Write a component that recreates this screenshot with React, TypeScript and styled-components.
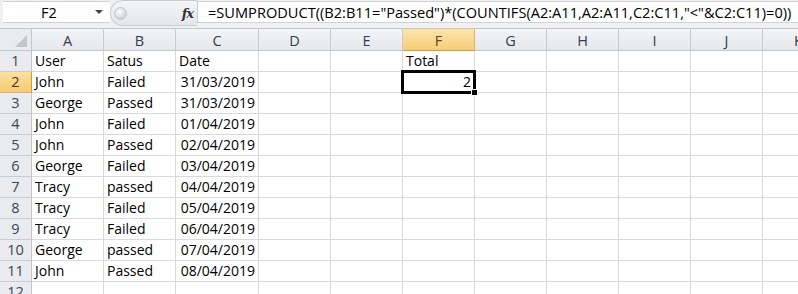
import styled, {createGlobalStyle} from "styled-components";

const GlobalStyle = createGlobalStyle`
  html, body {
    margin: 0;
    padding: 0;
    background: #fff;
    overflow: hidden;
  }
  * {
    box-sizing: border-box;
  }
`

const COLS = [
  {key: "A", width: 72},
  {key: "B", width: 72},
  {key: "C", width: 83},
  {key: "D", width: 72},
  {key: "E", width: 72},
  {key: "F", width: 72},
  {key: "G", width: 72},
  {key: "H", width: 72},
  {key: "I", width: 72},
  {key: "J", width: 72},
  {key: "K", width: 72},
]

const ACTIVE_COL = "F"
const ACTIVE_ROW = 2

const gridTemplate = `32px ${COLS.map(c => c.width + "px").join(" ")}`

const Sheet = styled.div`
  width: 798px;
  height: 294px;
  overflow: hidden;
  font-family: "Open Sans", "Liberation Sans", sans-serif;
  font-size: 14px;
  color: #000;
`

const FormulaBar = styled.div`
  display: flex;
  align-items: center;
  height: 29px;
  padding-left: 3px;
  background: #eef0f3;
  border-bottom: 1px solid #c3c7cd;
`

const NameBox = styled.div`
  position: relative;
  width: 107px;
  height: 22px;
  margin-top: -4px;
  background: #fff;
  border-top: 1px solid #cfd3d8;
  border-bottom: 1px solid #cfd3d8;
  display: flex;
  align-items: center;
  padding-left: 38px;
  font-size: 14.5px;
`

const DropArrow = styled.span`
  position: absolute;
  right: 7px;
  top: 8px;
  width: 0;
  height: 0;
  border-left: 4px solid transparent;
  border-right: 4px solid transparent;
  border-top: 4px solid #444;
`

const Splitter = styled.div`
  display: flex;
  align-items: center;
  justify-content: space-between;
  width: 87px;
  height: 26px;
  margin-top: -2px;
  padding: 0 4px 0 3px;
  background: linear-gradient(#f4f5f7, #e4e6ea);
  border: 1px solid #c8ccd2;
  border-right: none;
  border-radius: 13px 0 0 13px;
`

const Knob = styled.span`
  width: 13px;
  height: 13px;
  border-radius: 50%;
  background: radial-gradient(circle at 40% 35%, #ffffff 0%, #e0e2e5 45%, #b9bcc1 100%);
  border: 1px solid #c4c7cc;
`

const FxLabel = styled.span`
  font-family: "DejaVu Serif", "Liberation Serif", serif;
  font-style: italic;
  font-weight: bold;
  font-size: 13px;
  color: #333;
  margin-top: 1px;
  letter-spacing: -1px;
`

const FormulaInput = styled.div`
  flex: 1;
  height: 22px;
  margin-top: -4px;
  background: #fff;
  border-top: 1px solid #cfd3d8;
  border-bottom: 1px solid #cfd3d8;
  border-left: 1px solid #c8ccd2;
  padding-left: 10px;
  display: flex;
  align-items: center;
  font-size: 14.6px;
  white-space: nowrap;
  overflow: hidden;
`

const Row = styled.div<{$h: number}>`
  display: grid;
  grid-template-columns: ${gridTemplate};
  height: ${p => p.$h}px;
`

const Corner = styled.div`
  position: relative;
  background: #e9ebee;
  border-right: 1px solid #c3c7cd;
  border-bottom: 1px solid #c3c7cd;
  &::after {
    content: "";
    position: absolute;
    right: 4px;
    bottom: 3px;
    width: 0;
    height: 0;
    border-left: 12px solid transparent;
    border-bottom: 12px solid #c3c7cd;
  }
`

const ColHeader = styled.div<{$active?: boolean}>`
  display: flex;
  align-items: center;
  justify-content: center;
  padding-top: 1px;
  background: ${p => p.$active
    ? "linear-gradient(#fbe4ac, #f6ce7b)"
    : "linear-gradient(#f3f4f6, #e5e7eb)"};
  border-right: 1px solid ${p => p.$active ? "#e2b45a" : "#c8ccd2"};
  border-bottom: 1px solid ${p => p.$active ? "#e39a1c" : "#c3c7cd"};
  color: ${p => p.$active ? "#5b4420" : "#2f3d51"};
  font-size: 14.5px;
`

const RowHeader = styled.div<{$active?: boolean}>`
  display: flex;
  align-items: flex-end;
  justify-content: center;
  padding-bottom: 1px;
  line-height: 18px;
  background: ${p => p.$active ? "linear-gradient(#fbe1a3, #f5ca72)" : "#e9ebee"};
  border-right: 1px solid ${p => p.$active ? "#e39a1c" : "#c3c7cd"};
  border-bottom: 1px solid ${p => p.$active ? "#e2b45a" : "#c8ccd2"};
  color: ${p => p.$active ? "#4a3a1d" : "#3c4658"};
  font-size: 14.5px;
`

const Cell = styled.div<{$align?: string; $selected?: boolean}>`
  position: relative;
  z-index: ${p => p.$selected ? 2 : "auto"};
  display: flex;
  align-items: flex-end;
  justify-content: ${p => p.$align === "right" ? "flex-end" : "flex-start"};
  padding: 0 3px 1px 3px;
  line-height: 18px;
  border-right: 1px solid #dadada;
  border-bottom: 1px solid #dadada;
  white-space: nowrap;
`

const Selection = styled.div`
  position: absolute;
  left: -2px;
  top: -2px;
  right: -2px;
  bottom: -2px;
  border: 3px solid #000;
  pointer-events: none;
`

const FillHandle = styled.span`
  position: absolute;
  right: -5px;
  bottom: -5px;
  width: 7px;
  height: 7px;
  background: #000;
  border: 1px solid #fff;
`

type CellData = {text: string; align?: "left" | "right"}

const data: Record<number, Record<string, CellData>> = {
  1: {A: {text: "User"}, B: {text: "Satus"}, C: {text: "Date"}, F: {text: "Total"}},
  2: {A: {text: "John"}, B: {text: "Failed"}, C: {text: "31/03/2019", align: "right"}, F: {text: "2", align: "right"}},
  3: {A: {text: "George"}, B: {text: "Passed"}, C: {text: "31/03/2019", align: "right"}},
  4: {A: {text: "John"}, B: {text: "Failed"}, C: {text: "01/04/2019", align: "right"}},
  5: {A: {text: "John"}, B: {text: "Passed"}, C: {text: "02/04/2019", align: "right"}},
  6: {A: {text: "George"}, B: {text: "Failed"}, C: {text: "03/04/2019", align: "right"}},
  7: {A: {text: "Tracy"}, B: {text: "passed"}, C: {text: "04/04/2019", align: "right"}},
  8: {A: {text: "Tracy"}, B: {text: "Failed"}, C: {text: "05/04/2019", align: "right"}},
  9: {A: {text: "Tracy"}, B: {text: "Failed"}, C: {text: "06/04/2019", align: "right"}},
  10: {A: {text: "George"}, B: {text: "passed"}, C: {text: "07/04/2019", align: "right"}},
  11: {A: {text: "John"}, B: {text: "Passed"}, C: {text: "08/04/2019", align: "right"}},
  12: {},
}

const formula = '=SUMPRODUCT((B2:B11="Passed")*(COUNTIFS(A2:A11,A2:A11,C2:C11,"<"&C2:C11)=0))'

const App = () => {
  const rows = Object.keys(data).map(Number)
  return (
    <Sheet>
      <GlobalStyle/>
      <FormulaBar>
        <NameBox>
          F2
          <DropArrow/>
        </NameBox>
        <Splitter>
          <Knob/>
          <FxLabel>fx</FxLabel>
        </Splitter>
        <FormulaInput>{formula}</FormulaInput>
      </FormulaBar>

      <Row $h={22}>
        <Corner/>
        {COLS.map(c => (
          <ColHeader key={c.key} $active={c.key === ACTIVE_COL}>{c.key}</ColHeader>
        ))}
      </Row>

      {rows.map(r => (
        <Row key={r} $h={21}>
          <RowHeader $active={r === ACTIVE_ROW}>{r}</RowHeader>
          {COLS.map(c => {
            const cell = data[r][c.key]
            const selected = r === ACTIVE_ROW && c.key === ACTIVE_COL
            return (
              <Cell key={c.key} $align={cell?.align} $selected={selected}>
                {cell?.text}
                {selected && (
                  <Selection>
                    <FillHandle/>
                  </Selection>
                )}
              </Cell>
            )
          })}
        </Row>
      ))}
    </Sheet>
  )
}

export default App
